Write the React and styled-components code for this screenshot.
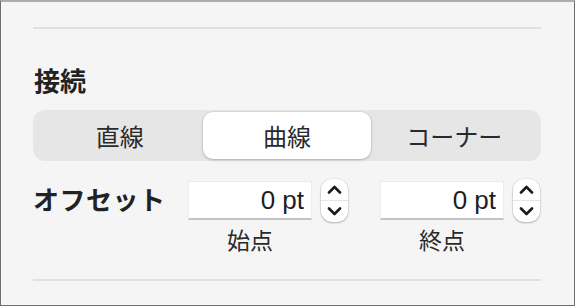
import styled, { createGlobalStyle } from 'styled-components';

const GlobalStyle = createGlobalStyle`
    html, body {
        margin: 0;
        padding: 0;
        background: #f5f5f5;
    }
`;

const Panel = styled.div`
    box-sizing: border-box;
    width: 575px;
    height: 306px;
    padding: 25px 33px 0 32px;
    background: #f5f5f5;
    border-top: 2px solid #adadad;
    border-left: 1px solid #6e6e6e;
    border-right: 1px solid #6e6e6e;
    border-bottom: 1px solid #6e6e6e;
    font-family: 'Liberation Sans', 'Noto Sans CJK JP', sans-serif;
    color: #222;
`;

const Divider = styled.div`
    height: 2px;
    background: #e0e0e0;
    margin-top: ${({ $top }) => $top || 0}px;
`;

const Heading = styled.h2`
    margin: 36px 0 0 1px;
    font-size: 26px;
    line-height: 34px;
    font-weight: 700;
    color: #222;
`;

const Segments = styled.div`
    display: grid;
    grid-template-columns: repeat(3, 1fr);
    height: 51px;
    margin-top: 11px;
    padding: 2px 3px;
    box-sizing: border-box;
    background: #e6e6e6;
    border-radius: 12px;
`;

const Segment = styled.button`
    border: none;
    border-radius: 10px;
    background: ${({ $active }) => ($active ? '#fff' : 'transparent')};
    box-shadow: ${({ $active }) =>
        $active ? '0 1px 3px rgba(0, 0, 0, 0.22), 0 0 0 0.5px rgba(0, 0, 0, 0.06)' : 'none'};
    font-family: 'Liberation Sans', 'Noto Sans CJK JP', sans-serif;
    font-size: 24px;
    color: #2a2a2a;
    padding: 0;
`;

const OffsetRow = styled.div`
    display: flex;
    align-items: flex-start;
    margin-top: 18px;
`;

const RowLabel = styled.div`
    width: 155px;
    padding-top: 6px;
    font-size: 26px;
    line-height: 32px;
    font-weight: 700;
    letter-spacing: 0.5px;
`;

const FieldGroup = styled.div`
    display: flex;
    flex-direction: column;
    align-items: flex-start;
    margin-right: ${({ $gap }) => $gap || 0}px;
`;

const FieldLine = styled.div`
    display: flex;
    align-items: flex-start;
    gap: 9px;
`;

const ValueBox = styled.div`
    box-sizing: border-box;
    width: 124px;
    height: 39px;
    margin-top: 2px;
    padding-right: 7px;
    background: #fff;
    border: 1px solid #ececec;
    border-bottom: 2px solid #c4c4c4;
    display: flex;
    align-items: center;
    justify-content: flex-end;
    font-size: 26px;
    color: #1e1e1e;
`;

const Stepper = styled.div`
    width: 27px;
    height: 43px;
    background: #fff;
    border-radius: 11px;
    box-shadow: 0 1px 2px rgba(0, 0, 0, 0.25), 0 0 0 0.5px rgba(0, 0, 0, 0.1);
    display: flex;
    flex-direction: column;
`;

const StepHalf = styled.div`
    flex: 1;
    display: flex;
    align-items: center;
    justify-content: center;
    border-top: ${({ $lower }) => ($lower ? '1px solid #e4e4e4' : 'none')};
`;

const FieldCaption = styled.div`
    width: 124px;
    margin-top: 5px;
    text-align: center;
    font-size: 23px;
    line-height: 28px;
    color: #2a2a2a;
`;

const Chevron = ({ up }) => (
    <svg width="15" height="9" viewBox="0 0 15 9">
        <path
            d={up ? 'M2 7.5 L7.5 2 L13 7.5' : 'M2 1.5 L7.5 7 L13 1.5'}
            fill="none"
            stroke="#1c1c1c"
            strokeWidth="2.6"
            strokeLinecap="round"
            strokeLinejoin="round"
        />
    </svg>
);

const OffsetField = ({ caption, gap }) => (
    <FieldGroup $gap={gap}>
        <FieldLine>
            <ValueBox>0 pt</ValueBox>
            <Stepper>
                <StepHalf>
                    <Chevron up />
                </StepHalf>
                <StepHalf $lower>
                    <Chevron />
                </StepHalf>
            </Stepper>
        </FieldLine>
        <FieldCaption>{caption}</FieldCaption>
    </FieldGroup>
);

const App = () => {
    return (
        <>
            <GlobalStyle />
            <Panel>
                <Divider />
                <Heading>接続</Heading>
                <Segments>
                    <Segment>直線</Segment>
                    <Segment $active>曲線</Segment>
                    <Segment>コーナー</Segment>
                </Segments>
                <OffsetRow>
                    <RowLabel>オフセット</RowLabel>
                    <OffsetField caption="始点" gap={32} />
                    <OffsetField caption="終点" />
                </OffsetRow>
                <Divider $top={24} />
            </Panel>
        </>
    );
};

export default App;
